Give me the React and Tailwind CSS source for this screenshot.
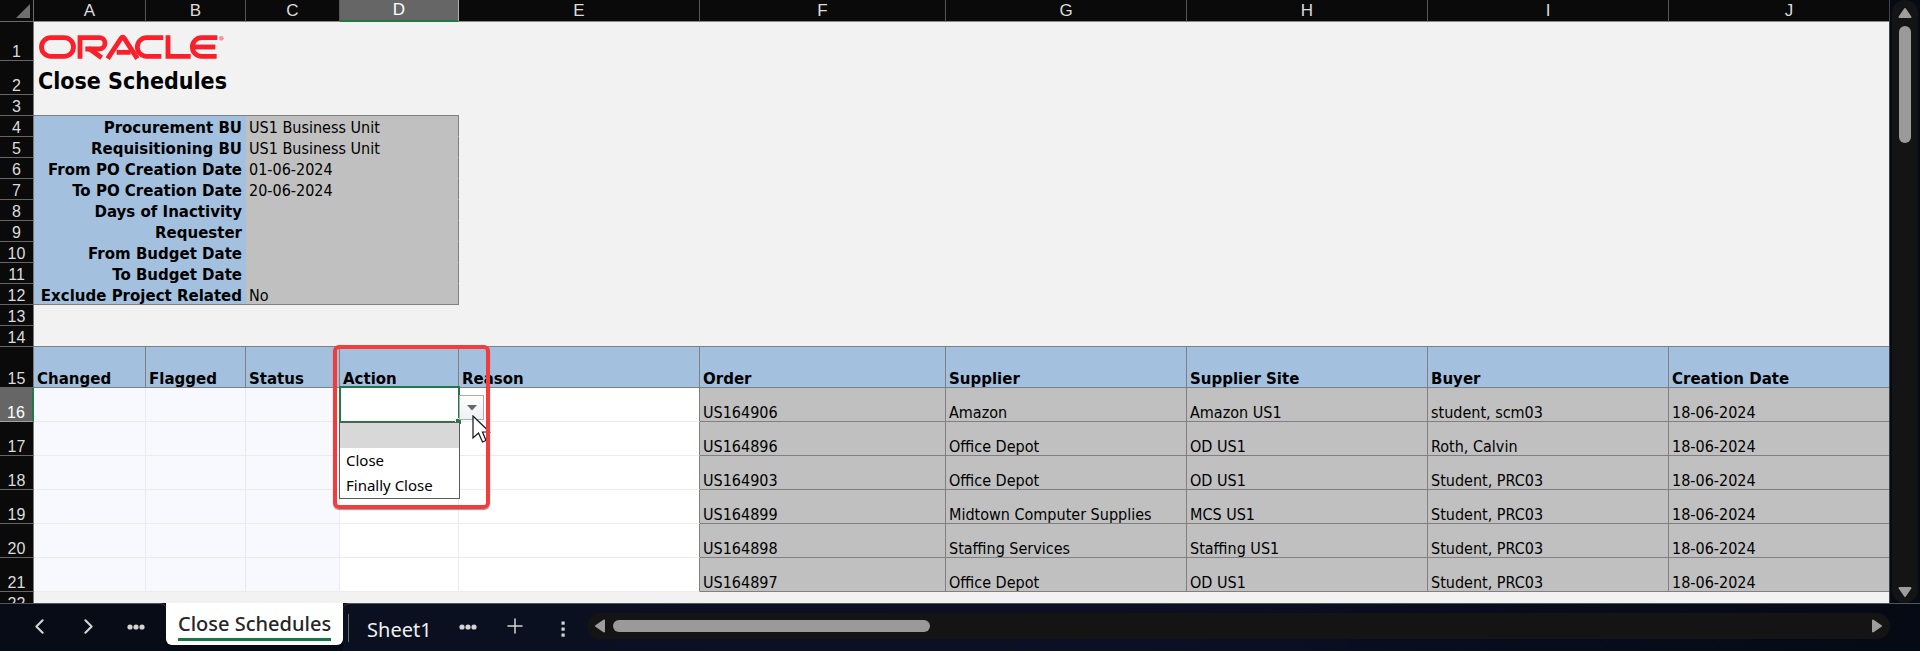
import React, { useState } from "react";
import { ChevronLeft, ChevronRight, Plus } from "lucide-react";

const LETTERS = ["A", "B", "C", "D", "E", "F", "G", "H", "I", "J"];

const CRITERIA = [
  [4, "Procurement BU", "US1 Business Unit"],
  [5, "Requisitioning BU", "US1 Business Unit"],
  [6, "From PO Creation Date", "01-06-2024"],
  [7, "To PO Creation Date", "20-06-2024"],
  [8, "Days of Inactivity", ""],
  [9, "Requester", ""],
  [10, "From Budget Date", ""],
  [11, "To Budget Date", ""],
  [12, "Exclude Project Related", "No"],
];

const HEADINGS = ["Changed", "Flagged", "Status", "Action", "Reason", "Order", "Supplier", "Supplier Site", "Buyer", "Creation Date"];

const ORDERS = [
  [16, "US164906", "Amazon", "Amazon US1", "student, scm03", "18-06-2024"],
  [17, "US164896", "Office Depot", "OD US1", "Roth, Calvin", "18-06-2024"],
  [18, "US164903", "Office Depot", "OD US1", "Student, PRC03", "18-06-2024"],
  [19, "US164899", "Midtown Computer Supplies", "MCS US1", "Student, PRC03", "18-06-2024"],
  [20, "US164898", "Staffing Services", "Staffing US1", "Student, PRC03", "18-06-2024"],
  [21, "US164897", "Office Depot", "OD US1", "Student, PRC03", "18-06-2024"],
];

const ACTIONS = ["", "Close", "Finally Close"];

function RowNumber({ n, active = false }) {
  return (
    <th
      scope="row"
      className={
        "p-0 align-bottom border-b text-center font-['Liberation_Sans',sans-serif] text-base leading-4 font-normal " +
        (active
          ? "bg-[#666666] text-white border-b-[#a0a0a0] border-r-2 border-r-[#1f7a45]"
          : "bg-[#0a0a0a] text-[#dcdcdc] border-b-[#666666] border-r border-r-[#7a7a7a]")
      }
    >
      {n}
    </th>
  );
}

function OracleLogo() {
  return (
    <svg viewBox="114 102 570 78" className="ml-1 block h-[26px] w-[190px]" role="img" aria-label="Oracle">
      <g fill="none" stroke="#f9202a" strokeWidth="14.500">
        <rect x="124.500" y="113" width="96" height="56" rx="28" />
        <path d="M240 176V113H298a17 17 0 0 1 0 34H256" />
        <path d="M266 145L305 173" />
        <path d="M323 176L363 115Q368 108 373 115L412 176" />
        <path d="M350 157H392" />
        <path d="M490 113H440a28 28 0 0 0 0 56H484" />
        <path d="M504 106V169H572" />
        <path d="M652 113H605a28 28 0 0 0 0 56H650" />
        <path d="M578 141H646" />
      </g>
      <circle cx="664" cy="115" r="7" fill="#f9202a" opacity="0.45" />
    </svg>
  );
}

function ActionCell() {
  const [open, setOpen] = useState(true);
  const [value, setValue] = useState("");
  return (
    <td className="relative border-r border-b border-[#ebebeb] bg-white p-0 pl-[3px] align-bottom">
      {value}
      <div className="pointer-events-none absolute -top-0.5 -right-0.5 -bottom-0.5 -left-px z-10 border-2 border-[#1f7a45]" />
      <div className="absolute -right-[3px] -bottom-[3px] z-10 size-[5px] bg-[#1f7a45] outline outline-white" />
      <button
        type="button"
        aria-label="Choose an action"
        aria-haspopup="listbox"
        aria-expanded={open}
        onClick={() => setOpen(!open)}
        className="absolute top-[7px] left-full z-10 ml-px flex size-[25px] items-center justify-center border border-[#acacac] bg-linear-to-b from-white to-[#eef0f5]"
      >
        <svg viewBox="0 0 10 6" className="h-1.5 w-2.5">
          <path d="M0 0H10L5 5.500Z" fill="#666666" />
        </svg>
      </button>
      {open && (
        <div
          role="listbox"
          aria-label="Action"
          className="absolute top-full -right-0.5 -left-px z-20 mt-px flex flex-col border border-[#5c5c5c] bg-white font-['Noto_Sans',sans-serif] text-[15px] leading-[25px] text-black"
        >
          {ACTIONS.map((a) => (
            <button
              key={a}
              type="button"
              role="option"
              aria-label={a || "Blank"}
              aria-selected={a === value}
              onClick={() => {
                setValue(a);
                setOpen(false);
              }}
              className={"h-[25px] pl-1.5 text-left whitespace-nowrap " + (a === value ? "bg-[#d8d8d8]" : "bg-white")}
            >
              {a}
            </button>
          ))}
        </div>
      )}
      <svg viewBox="0 0 20 30" className="pointer-events-none absolute top-[27px] left-[132px] z-20 h-[30px] w-5">
        <path d="M1 1V23L6.500 18L10.500 27L14 25.500L10.500 17H17.500Z" fill="white" stroke="#111122" strokeWidth="1.200" />
      </svg>
      <div className="pointer-events-none absolute -top-[43px] -left-[7px] z-30 h-[164px] w-[157px] rounded-md border-4 border-[#f33c3c] shadow-[0_1px_1px_rgba(80,80,80,0.6)]" />
    </td>
  );
}

function Sheet() {
  return (
    <table className="w-full table-fixed border-separate border-spacing-0 font-['DejaVu_Sans_Condensed','DejaVu_Sans',sans-serif] text-base leading-4 text-black">
      <colgroup>
        <col className="w-[34px]" />
        <col className="w-[112px]" />
        <col className="w-[100px]" />
        <col className="w-[94px]" />
        <col className="w-[119px]" />
        <col className="w-[241px]" />
        <col className="w-[246px]" />
        <col className="w-[241px]" />
        <col className="w-[241px]" />
        <col className="w-[241px]" />
        <col className="w-[241px]" />
      </colgroup>
      <thead>
        <tr className="h-[22px] font-['Liberation_Sans',sans-serif] text-[17px] leading-5">
          <td className="border-r border-b border-[#6a6a6a] bg-[#0a0a0a] p-0 align-bottom">
            <svg viewBox="0 0 14 14" className="mr-[3px] mb-[3px] ml-auto block size-3.5">
              <path d="M14 0V14H0Z" fill="#6f6f6f" />
            </svg>
          </td>
          {LETTERS.map((l) => (
            <th
              key={l}
              scope="col"
              className={
                "p-0 align-bottom font-normal " +
                (l === "D"
                  ? "border-r border-r-[#b0b0b0] border-b-2 border-b-[#1f7a45] bg-[#666666] text-white"
                  : "border-r border-b border-r-[#555555] border-b-[#8a8a8a] bg-[#0a0a0a] text-[#dcdcdc]")
              }
            >
              {l}
            </th>
          ))}
        </tr>
      </thead>
      <tbody>
        <tr className="h-[39px]">
          <RowNumber n={1} />
          <td colSpan={10} className="p-0 pb-px align-bottom">
            <OracleLogo />
          </td>
        </tr>
        <tr className="h-[34px]">
          <RowNumber n={2} />
          <td colSpan={10} className="p-0 pl-1 align-bottom">
            <h1 className="text-[23px] leading-7 font-bold">Close Schedules</h1>
          </td>
        </tr>
        <tr className="h-[21px]">
          <RowNumber n={3} />
          <td colSpan={4} className="border-b border-[#808080] p-0" />
          <td colSpan={6} className="p-0" />
        </tr>
        {CRITERIA.map(([n, label, value], i) => {
          const last = i === CRITERIA.length - 1;
          return (
            <tr key={n} className="h-[21px]">
              <RowNumber n={n} />
              <th
                scope="row"
                colSpan={2}
                className={
                  "border-b bg-[#a3c1df] p-0 pr-1 text-right align-bottom font-['DejaVu_Sans',sans-serif] text-[15px] font-bold whitespace-nowrap " +
                  (last ? "border-[#808080]" : "border-[#a3c1df]")
                }
              >
                {label}
              </th>
              <td
                colSpan={2}
                className={
                  "border-r border-b border-r-[#808080] bg-[#c0c0c0] p-0 pl-[3px] align-bottom whitespace-nowrap " +
                  (last ? "border-b-[#808080]" : "border-b-[#c0c0c0]")
                }
              >
                {value}
              </td>
              <td colSpan={6} className="p-0" />
            </tr>
          );
        })}
        <tr className="h-[21px]">
          <RowNumber n={13} />
          <td colSpan={10} className="p-0" />
        </tr>
        <tr className="h-[21px]">
          <RowNumber n={14} />
          <td colSpan={10} className="border-b border-[#808080] p-0" />
        </tr>
        <tr className="h-[41px]">
          <RowNumber n={15} />
          {HEADINGS.map((h) => (
            <th
              key={h}
              scope="col"
              className="border-r border-b border-[#808080] bg-[#a3c1df] p-0 pl-[3px] text-left align-bottom font-['DejaVu_Sans',sans-serif] text-[15px] font-bold whitespace-nowrap"
            >
              {h}
            </th>
          ))}
        </tr>
        {ORDERS.map(([n, ...cells]) => (
          <tr key={n} className="h-[34px]">
            <RowNumber n={n} active={n === 16} />
            <td className="border-r border-b border-[#ebebeb] bg-[#f8f9fe] p-0" />
            <td className="border-r border-b border-[#ebebeb] bg-[#f8f9fe] p-0" />
            <td className="border-r border-b border-[#ebebeb] bg-[#f8f9fe] p-0" />
            {n === 16 ? <ActionCell /> : <td className="border-r border-b border-[#ebebeb] bg-white p-0" />}
            <td className="border-r border-b border-r-[#808080] border-b-[#ebebeb] bg-white p-0" />
            {cells.map((c, i) => (
              <td
                key={i}
                className="border-r border-b border-[#808080] bg-[#c0c0c0] p-0 pl-[3px] align-bottom whitespace-nowrap"
              >
                {c}
              </td>
            ))}
          </tr>
        ))}
        <tr className="h-[21px]">
          <RowNumber n={22} />
          <td colSpan={10} className="p-0" />
        </tr>
      </tbody>
    </table>
  );
}

function Triangle({ d, className }) {
  return (
    <svg viewBox="0 0 14 14" className={className}>
      <path d={d} fill="#9d9d9d" stroke="#9d9d9d" strokeWidth="2" strokeLinejoin="round" />
    </svg>
  );
}

function Dots({ vertical = false }) {
  return vertical ? (
    <svg viewBox="0 0 4 16" className="h-4 w-1" fill="#d4d4d4">
      <rect x="0.500" y="0.500" width="3.200" height="3.200" />
      <rect x="0.500" y="6.500" width="3.200" height="3.200" />
      <rect x="0.500" y="12.500" width="3.200" height="3.200" />
    </svg>
  ) : (
    <svg viewBox="0 0 18 6" className="h-1.5 w-[18px]" fill="#d4d4d4">
      <circle cx="3" cy="3" r="2.600" />
      <circle cx="9" cy="3" r="2.600" />
      <circle cx="15" cy="3" r="2.600" />
    </svg>
  );
}

export default function App() {
  return (
    <div className="flex h-screen flex-col overflow-hidden bg-[#060a14]">
      <div className="flex min-h-0 flex-1">
        <main className="min-w-0 flex-1 overflow-hidden bg-[#f2f2f2]">
          <Sheet />
        </main>
        <div className="flex w-[31px] flex-col border-l border-[#444444] px-0.5">
          <div className="flex min-h-0 flex-1 flex-col items-center rounded-full bg-[#141414] pt-1.5 pb-1">
            <button type="button" aria-label="Scroll up">
              <Triangle d="M7 3L12.500 11H1.500Z" className="block size-3.5" />
            </button>
            <div className="mt-1.5 h-[117px] w-3 rounded-full bg-[#9a9a9a]" />
            <button type="button" aria-label="Scroll down" className="mt-auto">
              <Triangle d="M7 11L12.500 3H1.500Z" className="block size-3.5" />
            </button>
          </div>
        </div>
      </div>
      <nav aria-label="Sheets" className="flex h-12 text-[#d4d4d4]">
        <div className="flex w-[166px] items-start rounded-tr-md border-t border-[#555555] bg-[#070c16] pl-[27px]">
          <button type="button" aria-label="Previous sheet" className="mt-2.5">
            <ChevronLeft size={25} strokeWidth={2} />
          </button>
          <button type="button" aria-label="Next sheet" className="mt-2.5 ml-6">
            <ChevronRight size={25} strokeWidth={2} />
          </button>
          <button type="button" aria-label="All sheets" className="mt-5 ml-[26px]">
            <Dots />
          </button>
        </div>
        <button
          type="button"
          aria-current="page"
          className="flex h-[42px] items-start rounded-b-md bg-white px-3 font-['Noto_Sans',sans-serif] text-xl font-medium text-[#262626]"
        >
          <span className="block border-b-3 border-[#107c41] pt-[7px] leading-7 whitespace-nowrap">Close Schedules</span>
        </button>
        <div className="flex min-w-0 flex-1 items-start rounded-tl-md border-t border-[#555555] bg-linear-to-r from-[#0b1020] via-[#0b1024] to-[#050a14] pr-[30px]">
          <div className="mt-2.5 ml-[5px] h-7 w-px bg-[#6a6a6a]" />
          <button type="button" className="mt-3 ml-[18px] font-['Noto_Sans',sans-serif] text-xl leading-7 text-[#f0f0f0]">
            Sheet1
          </button>
          <button type="button" aria-label="More sheets" className="mt-5 ml-[27px]">
            <Dots />
          </button>
          <button type="button" aria-label="Add sheet" className="mt-2.5 ml-[26px]">
            <Plus size={24} strokeWidth={1.5} />
          </button>
          <button type="button" aria-label="Sheet options" className="mt-[17px] ml-[34px]">
            <Dots vertical />
          </button>
          <div className="mt-[9px] ml-[22px] flex h-[26px] min-w-0 flex-1 items-center rounded-full bg-[#141414] px-1.5">
            <button type="button" aria-label="Scroll left">
              <Triangle d="M3 7L11 12.500V1.500Z" className="block size-3.5" />
            </button>
            <div className="ml-1.5 h-3 w-[317px] rounded-full bg-[#9a9a9a]" />
            <button type="button" aria-label="Scroll right" className="ml-auto">
              <Triangle d="M11 7L3 12.500V1.500Z" className="block size-3.5" />
            </button>
          </div>
        </div>
      </nav>
    </div>
  );
}
